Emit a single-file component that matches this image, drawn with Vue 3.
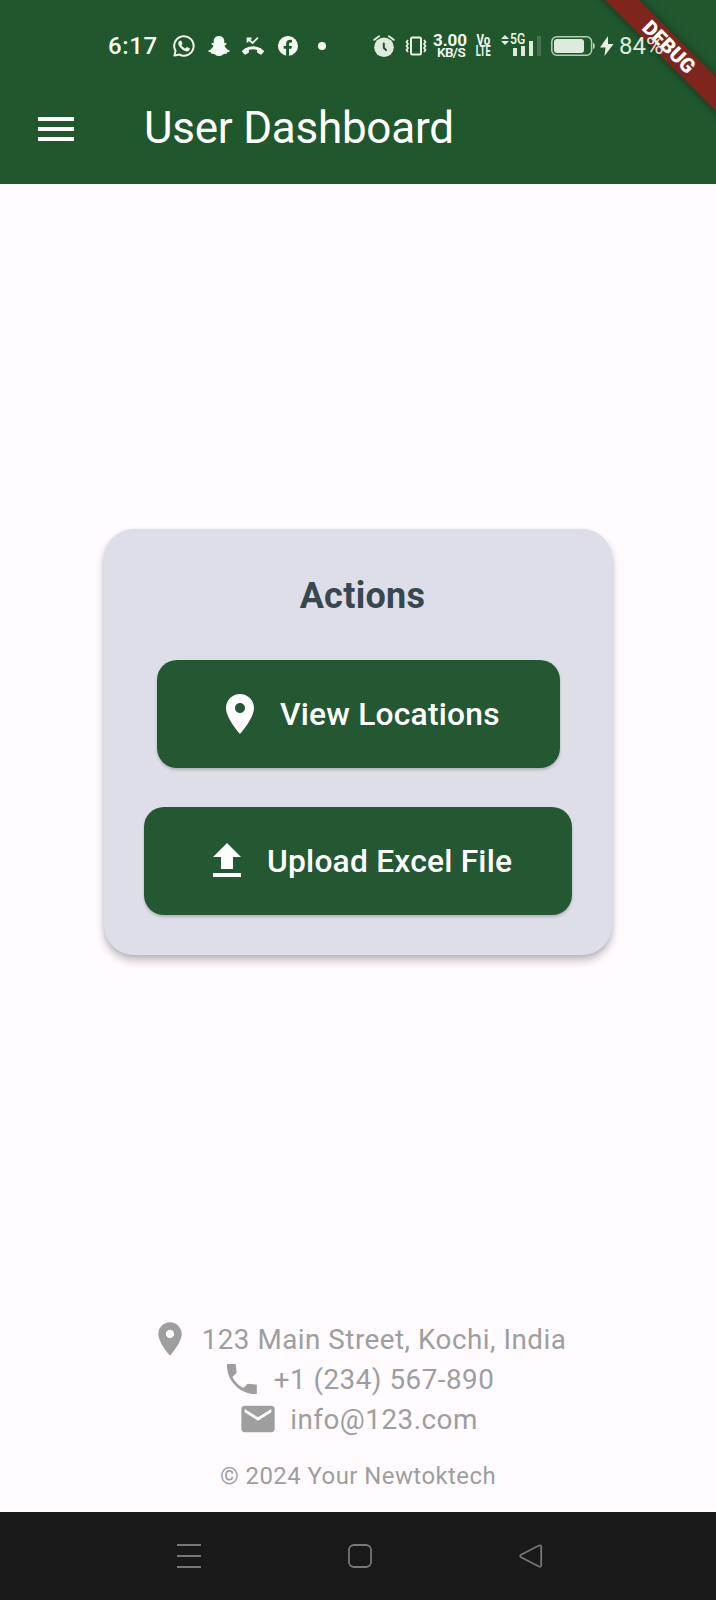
<script setup>
const PIN = 'M12 2C8.13 2 5 5.13 5 9c0 5.25 7 13 7 13s7-7.75 7-13c0-3.87-3.13-7-7-7zm0 9.5c-1.38 0-2.5-1.12-2.5-2.5s1.12-2.5 2.5-2.5 2.5 1.12 2.5 2.5-1.12 2.5-2.5 2.5z'

const actions = [
  { id: 'view', label: 'View Locations', icon: PIN },
  { id: 'upload', label: 'Upload Excel File', icon: 'M5 20h14v-2H5v2zm0-10h4v6h6v-6h4l-7-7-7 7z' },
]

const contacts = [
  { id: 'address', label: '123 Main Street, Kochi, India', icon: PIN },
  {
    id: 'phone',
    label: '+1 (234) 567-890',
    icon: 'M20.900 15.400l-5.500-.6-2.600 2.600c-2.800-1.400-5.100-3.700-6.600-6.600l2.600-2.600L8.200 3H3C2.500 12.900 11 21.500 20.900 21z',
  },
  {
    id: 'mail',
    label: 'info@123.com',
    icon: 'M20 4H4c-1.1 0-1.99.9-1.99 2L2 18c0 1.1.9 2 2 2h16c1.1 0 2-.9 2-2V6c0-1.1-.9-2-2-2zm0 4l-8 5-8-5V6l8 5 8-5v2z',
  },
]
</script>

<template>
  <div class="screen">
    <header class="top">
      <div class="ribbon-clip"><div class="ribbon">DEBUG</div></div>
      <div class="status">
        <span class="clock">6:17</span>
        <svg class="whatsapp" width="22" height="22" viewBox="0 0 24 24">
          <path fill="#f4fbf2" stroke="#f4fbf2" stroke-width=".5" d="M17.472 14.382c-.297-.149-1.758-.867-2.03-.967-.273-.099-.471-.148-.67.15-.197.297-.767.966-.94 1.164-.173.199-.347.223-.644.075-.297-.15-1.255-.463-2.39-1.475-.883-.788-1.48-1.761-1.653-2.059-.173-.297-.018-.458.13-.606.134-.133.298-.347.446-.52.149-.174.198-.298.298-.497.099-.198.05-.371-.025-.52-.075-.149-.669-1.612-.916-2.207-.242-.579-.487-.5-.669-.51-.173-.008-.371-.01-.57-.01-.198 0-.52.074-.792.372-.272.297-1.04 1.016-1.04 2.479 0 1.462 1.065 2.875 1.213 3.074.149.198 2.096 3.2 5.077 4.487.709.306 1.262.489 1.694.625.712.227 1.36.195 1.871.118.571-.085 1.758-.719 2.006-1.413.248-.694.248-1.289.173-1.413-.074-.124-.272-.198-.57-.347" />
          <path fill="none" stroke="#f4fbf2" stroke-width="2.1" stroke-linejoin="round" d="M1.500 22.500l1.300-5.200a10.600 10.600 0 1 1 4.200 4z" />
        </svg>
        <svg class="snap" width="22" height="20" viewBox="0 0 22 20">
          <path fill="#f4fbf2" d="M11 0C7.700 0 5.700 2.200 5.700 5.300v1.900l-1.500-.2c-1 0-1 1.100-.2 1.600l1.400.9c-.5 2-2 3.900-4.700 4.900-1 .5-.3 1.500 2.100 1.900l.5 1.500c1.400-.2 2.600-.3 3.700.6C8.300 19.300 9.500 20 11 20s2.700-.7 4-1.600c1.100-.9 2.300-.8 3.700-.6l.5-1.500c2.400-.4 3.100-1.400 2.100-1.900-2.700-1-4.200-2.900-4.700-4.900l1.400-.9c.8-.5.8-1.600-.2-1.600l-1.500.2V5.300C16.300 2.200 14.300 0 11 0z" />
        </svg>
        <svg class="missed" width="24" height="20" viewBox="0 0 24 20">
          <path fill="none" stroke="#f4fbf2" stroke-width="1.800" d="M6.500 6.500V2.500H10.500M7 3l4.500 4L17 1.700" />
          <path fill="none" stroke="#f4fbf2" stroke-width="3" d="M4 14.500c4.500-3.600 11.500-3.600 16 0" />
          <path fill="#f4fbf2" stroke="#f4fbf2" stroke-linejoin="round" d="M1.200 15.200l3.400-2.700 2.900 1.700-.2 2.300-3.500 1.800zM22.800 15.200l-3.400-2.700-2.900 1.700.2 2.300 3.500 1.800z" />
        </svg>
        <svg class="facebook" width="20" height="20" viewBox="0 0 20 20">
          <path fill="#f4fbf2" d="M20 10A10 10 0 1 0 8.100 19.800v-7H5.700V10h2.400V8c0-2.900 1.500-4.300 4-4.300.9 0 1.900.2 1.900.2v2.500h-1.300c-1.300 0-1.600.8-1.600 1.600v2h2.800l-.5 2.800h-2.300v7A10 10 0 0 0 20 10z" />
        </svg>
        <span class="dot"></span>
        <svg class="alarm" width="22" height="22" viewBox="0 0 22 22">
          <circle cx="11" cy="12.200" r="9.800" fill="#dcebdc" />
          <path d="M1.300 4.800L6 1.200M20.700 4.800L16 1.200" stroke="#dcebdc" stroke-width="2" stroke-linecap="round" />
          <path d="M10.800 8.500v4.300l2.200 2.200" fill="none" stroke="#20572d" stroke-width="2" stroke-linecap="round" />
        </svg>
        <svg class="vibrate" width="22" height="20" viewBox="0 0 22 20" fill="none" stroke="#eaf5e8">
          <rect x="6" y="1.500" width="10" height="17" rx="1.500" stroke-width="2" />
          <path stroke-width="1.700" d="M3 4L1.500 6 3 8 1.500 10 3 12 1.500 14 3 16M19 4l1.500 2L19 8l1.500 2L19 12l1.500 2L19 16" />
        </svg>
        <span class="speed"><b>3.00</b><i>KB/S</i></span>
        <span class="volte"><b>Vo</b><b>LTE</b></span>
        <span class="signal">
          <span class="net">
            <svg width="8" height="10" viewBox="0 0 8 10"><path fill="#e4f1e3" d="M4 0l4 4H0zM4 10L0 6h8z" /></svg>
            <b>5G</b>
          </span>
          <svg class="bars" width="29" height="20" viewBox="0 0 29 20">
            <path fill="#dcebdc" d="M1 12h4v8H1zM9 10h4v10H9zM17 5h4v15h-4z" />
            <path fill="#447450" d="M25 0h4v20h-4z" />
          </svg>
        </span>
        <svg class="battery" width="44" height="20" viewBox="0 0 44 20">
          <rect x=".8" y=".8" width="39.800" height="18.400" rx="5" fill="none" stroke="#b4d2b5" stroke-width="1.500" />
          <rect x="3" y="3" width="30" height="14" rx="3" fill="#dcebdc" />
          <path d="M42 6.500q1.800.5 1.800 3.500t-1.800 3.500z" fill="#b4d2b5" />
        </svg>
        <svg class="bolt" width="14" height="20" viewBox="0 0 14 20"><path fill="#e4f1e3" d="M8 0L0 11.500h5.500L4.500 20 13.500 8H8z" /></svg>
        <span class="percent">84%</span>
      </div>
      <div class="appbar">
        <svg width="48" height="48" viewBox="0 0 24 24"><path fill="#fff" d="M3 18h18v-2H3v2zm0-5h18v-2H3v2zm0-7v2h18V6H3z" /></svg>
        <h1>User Dashboard</h1>
      </div>
    </header>

    <main class="body">
      <section class="card">
        <h2>Actions</h2>
        <button v-for="a in actions" :key="a.id" :class="['action', a.id]">
          <svg width="48" height="48" viewBox="0 0 24 24"><path fill="#fff" :d="a.icon" /></svg>
          <span>{{ a.label }}</span>
        </button>
      </section>
    </main>

    <footer class="footer">
      <div v-for="c in contacts" :key="c.id" :class="['contact', c.id]">
        <svg width="40" height="40" viewBox="0 0 24 24"><path fill="#9e9e9e" :d="c.icon" /></svg>
        <span>{{ c.label }}</span>
      </div>
      <p>© 2024 Your Newtoktech</p>
    </footer>

    <nav class="nav">
      <svg width="24" height="24" viewBox="0 0 24 24"><path d="M0 1h24M0 12h24M0 23h24" stroke="#777" stroke-width="2" /></svg>
      <svg width="24" height="24" viewBox="0 0 24 24"><rect x="1" y="1" width="22" height="22" rx="5" fill="none" stroke="#777" stroke-width="1.800" /></svg>
      <svg width="24" height="24" viewBox="0 0 24 24"><path d="M2 10.800L20 1.500q2.200-.8 2.200 1.300v18.400q0 2.100-2.200 1.300L2 13.200q-1.600-1.200 0-2.400z" fill="none" stroke="#777" stroke-width="1.800" /></svg>
    </nav>
  </div>
</template>

<style>
body {
  margin: 0;
  background: #fffbff;
}
</style>

<style scoped>
.screen {
  width: 716px;
  height: 1600px;
  display: flex;
  flex-direction: column;
  overflow: hidden;
  background: #fffbff;
  font-family: Roboto, "Liberation Sans", sans-serif;
}
svg {
  display: block;
  flex: none;
}
.top {
  position: relative;
  height: 184px;
  flex: none;
  background: #20572d;
}
.status {
  position: relative;
  display: flex;
  align-items: center;
  height: 92px;
  padding-left: 108px;
  color: #f4fbf2;
  white-space: nowrap;
}
.status > * {
  flex: none;
}
.clock {
  width: 50px;
  font-size: 24px;
  font-weight: 500;
  letter-spacing: .6px;
}
.whatsapp { margin-left: 15px; }
.snap { margin-left: 13px; }
.missed { margin-left: 11px; }
.facebook { margin-left: 13px; }
.dot {
  width: 8px;
  height: 8px;
  margin-left: 20px;
  border-radius: 50%;
  background: #f4fbf2;
}
.alarm { margin-left: 47px; }
.vibrate { margin-left: 10px; }
.speed {
  display: flex;
  flex-direction: column;
  align-items: center;
  width: 36px;
  margin-left: 5px;
}
.speed b {
  font-size: 17px;
  line-height: 13px;
  font-weight: 700;
}
.speed i {
  padding-left: 2px;
  font-style: normal;
  font-size: 13.500px;
  line-height: 11px;
  font-weight: 600;
  letter-spacing: -.6px;
}
.volte {
  display: flex;
  flex-direction: column;
  align-items: center;
  width: 17px;
  margin-left: 7px;
}
.volte b {
  font-size: 14px;
  line-height: 11px;
  font-weight: 700;
  transform: scaleX(.66);
}
.volte b:first-child {
  transform: scaleX(.82);
}
.signal {
  display: grid;
  width: 40px;
  height: 20px;
  margin-left: 9px;
}
.signal > * {
  grid-area: 1 / 1;
}
.net {
  display: flex;
  gap: 1px;
  height: 10px;
  margin-top: -1px;
}
.net b {
  font-size: 14.500px;
  line-height: 10px;
  font-weight: 500;
  transform: scaleX(.84);
  transform-origin: left;
}
.bars { justify-self: end; }
.battery { margin-left: 10px; }
.bolt { margin-left: 5px; }
.percent {
  margin-left: 5px;
  font-size: 24px;
  color: #dcebdc;
}
.appbar {
  display: flex;
  align-items: center;
  padding: 13px 0 0 32px;
}
.appbar h1 {
  margin: -2px 0 0 64px;
  font-size: 44px;
  line-height: 48px;
  font-weight: 400;
  letter-spacing: -.25px;
  color: #fff;
}
.ribbon-clip {
  position: absolute;
  top: 0;
  right: 0;
  width: 180px;
  height: 184px;
  overflow: hidden;
}
.ribbon {
  position: absolute;
  left: 33px;
  top: 35px;
  width: 200px;
  height: 24px;
  transform: rotate(45deg);
  background: #7e261e;
  box-shadow: 0 0 10px rgba(0, 0, 0, .4);
  color: #fff;
  font-size: 20.300px;
  line-height: 24px;
  font-weight: 900;
  text-align: center;
}
.body {
  display: flex;
  flex: none;
  justify-content: center;
  height: 1135px;
}
.card {
  display: flex;
  flex-direction: column;
  align-items: center;
  align-self: flex-start;
  box-sizing: border-box;
  width: 508px;
  height: 426px;
  margin-top: 345px;
  border-radius: 30px;
  background: #dddee7;
  box-shadow: 0 6px 10px rgba(0, 0, 0, .22), 0 2px 5px rgba(0, 0, 0, .1);
}
.card h2 {
  margin: 43px 0 39px;
  padding-left: 9px;
  font-size: 36px;
  line-height: 49px;
  font-weight: 700;
  letter-spacing: .3px;
  color: #37474f;
}
.action {
  display: flex;
  align-items: center;
  gap: 16px;
  box-sizing: border-box;
  height: 107.500px;
  margin: 0 0 39.500px;
  padding: 0 0 0 59.500px;
  border: 0;
  border-radius: 20px;
  background: #235833;
  box-shadow: 0 2px 3px rgba(0, 0, 0, .2);
  font: 500 31.800px/48px Roboto, "Liberation Sans", sans-serif;
  letter-spacing: .2px;
  color: #fff;
  white-space: nowrap;
}
.action.view { width: 403px; }
.action.upload { width: 428px; padding-left: 59px; }
.footer {
  display: flex;
  flex-direction: column;
  align-items: center;
  flex: none;
  height: 193px;
  color: #9e9e9e;
}
.contact {
  display: flex;
  align-items: center;
  gap: 12px;
  height: 40px;
  font-size: 27.800px;
  letter-spacing: .5px;
  white-space: nowrap;
}
.footer p {
  margin: 23px 0 0;
  font-size: 23.900px;
  line-height: 28px;
  letter-spacing: .47px;
}
.nav {
  display: flex;
  align-items: center;
  justify-content: center;
  gap: 147px;
  flex: 1;
  padding-left: 3px;
  background: #191919;
}
</style>
